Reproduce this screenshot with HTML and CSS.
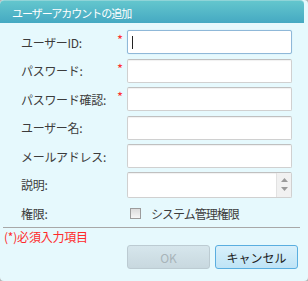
FILE: index.html
```html
<!DOCTYPE html>
<html lang="ja">
<head>
<meta charset="utf-8">
<link rel="stylesheet" href="styles.css">
</head>
<body>
<div class="dialog">
  <div class="titlebar">ユーザーアカウントの追加</div>
  <div class="content">
    <div class="form">
      <div class="row">
        <span class="label">ユーザーID:</span>
        <span class="req">*</span>
        <div class="input focused"><span class="caret"></span></div>
      </div>
      <div class="row">
        <span class="label">パスワード:</span>
        <span class="req">*</span>
        <div class="input"></div>
      </div>
      <div class="row">
        <span class="label">パスワード確認:</span>
        <span class="req">*</span>
        <div class="input"></div>
      </div>
      <div class="row">
        <span class="label">ユーザー名:</span>
        <span class="req"></span>
        <div class="input"></div>
      </div>
      <div class="row">
        <span class="label">メールアドレス:</span>
        <span class="req"></span>
        <div class="input"></div>
      </div>
      <div class="row">
        <span class="label">説明:</span>
        <span class="req"></span>
        <div class="input textarea">
          <div class="spin">
            <svg width="7" height="4" viewBox="0 0 7 4"><path d="M0 4 L3.5 0 L7 4 Z" fill="#9a9a9a"/></svg>
            <svg width="7" height="4" viewBox="0 0 7 4"><path d="M0 0 L3.5 4 L7 0 Z" fill="#9a9a9a"/></svg>
          </div>
        </div>
      </div>
      <div class="row check-row">
        <span class="label">権限:</span>
        <span class="req"></span>
        <label class="check"><span class="box"></span><span class="check-text">システム管理権限</span></label>
      </div>
    </div>
    <div class="sep"></div>
    <div class="note">(*)必須入力項目</div>
    <div class="buttons">
      <div class="btn disabled">OK</div>
      <div class="btn primary">キャンセル</div>
    </div>
  </div>
</div>
</body>
</html>
```

FILE: styles.css
```css
html, body {
  margin: 0;
  padding: 0;
}
body {
  width: 308px;
  height: 281px;
  background: #b4b4b4;
  font-family: "Noto Sans CJK JP", "DejaVu Sans", sans-serif;
  font-size: 12px;
  color: #3a3a3a;
  overflow: hidden;
}
.dialog {
  width: 308px;
  height: 281px;
  box-sizing: border-box;
  border-radius: 4px;
  background: #e6f9fd;
  overflow: hidden;
  display: flex;
  flex-direction: column;
}
.titlebar {
  height: 23px;
  box-sizing: border-box;
  padding: 3px 0 0 12px;
  background: linear-gradient(#63c6cd, #45a9c2);
  border-top: 1px solid #8fd4d8;
  color: #ffffff;
  font-size: 11px;
  letter-spacing: -1px;
  line-height: 18px;
  margin-right: 4px;
  border-radius: 4px 4px 0 0;
}
.content {
  flex: 1;
  display: flex;
  flex-direction: column;
}
.form {
  display: flex;
  flex-direction: column;
  padding: 7px 0 0 21px;
  gap: 4px;
}
.row {
  display: flex;
  align-items: center;
  height: 24.5px;
}
.label {
  width: 96px;
  font-size: 12px;
  letter-spacing: -0.3px;
  color: #3c3c3c;
  white-space: nowrap;
}
.req {
  width: 10px;
  color: #ff3030;
  font-size: 13px;
  line-height: 10px;
  align-self: flex-start;
  margin-top: 5px;
}
.input {
  width: 165px;
  height: 24px;
  box-sizing: border-box;
  background: #ffffff;
  border: 1px solid #d0d0d0;
  border-top-color: #c0c0c0;
  border-radius: 2px;
  box-shadow: inset 0 1px 1px rgba(0,0,0,0.06);
  display: flex;
  align-items: center;
}
.input.focused {
  border-color: #8fb8d8;
  box-shadow: 0 0 1px #a9d3ee;
}
.caret {
  display: block;
  width: 1px;
  height: 13px;
  margin-left: 4px;
  background: #222;
}
.textarea {
  height: 26px;
  justify-content: flex-end;
  align-items: stretch;
}
.spin {
  width: 14px;
  background: #f1f1f1;
  border-left: 1px solid #e2e2e2;
  display: flex;
  flex-direction: column;
  justify-content: space-around;
  align-items: center;
  padding: 3px 0;
}
.spin svg {
  display: block;
}
.check-row {
  height: 20px;
  margin-top: 2px;
}
.check {
  display: flex;
  align-items: center;
  gap: 10px;
  margin-left: 3px;
  color: #3c3c3c;
}
.check-text {
  letter-spacing: -1px;
}
.box {
  width: 9px;
  height: 9px;
  border: 1px solid #9c9c9c;
  background: linear-gradient(#dcdcdc, #f6f6f6);
}
.sep {
  height: 1px;
  background: #a8a8a8;
  margin: 4px 8px 0 3px;
}
.note {
  color: #ff2a2a;
  font-size: 12px;
  line-height: 14px;
  letter-spacing: -0.2px;
  padding: 2px 0 0 4px;
}
.buttons {
  display: flex;
  justify-content: flex-end;
  gap: 5px;
  padding: 1px 10px 0 0;
}
.btn {
  width: 83px;
  height: 24px;
  box-sizing: border-box;
  border-radius: 3px;
  display: flex;
  align-items: center;
  justify-content: center;
  font-size: 12px;
}
.btn.disabled {
  background: linear-gradient(#d6e6ec, #c8d8df);
  border: 1px solid #bccbd2;
  color: #a8b4b9;
}
.btn.primary {
  background: linear-gradient(#d8f0fb, #bfe4f6);
  border: 1px solid #5aaee0;
  color: #222;
}
```
